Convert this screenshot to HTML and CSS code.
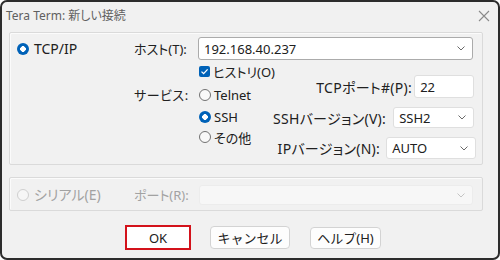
FILE: index.html
```html
<!DOCTYPE html>
<html>
<head>
    <title>Tera Term: 新しい接続</title>
    <link rel="stylesheet" href="styles.css">
</head>
<body>
    <div class="window">
        <div class="titlebar">
            <span class="title">Tera Term: 新しい接続</span>
            <svg class="close" width="12" height="12" viewBox="0 0 12 12">
                <path d="M1 1 L11 11 M11 1 L1 11" stroke="#8a8a8a" stroke-width="1.1" fill="none"/>
            </svg>
        </div>

        <!-- TCP/IP group -->
        <div class="group net">
            <div class="host-row">
                <label class="radio-item first"><span class="radio on"></span>TCP/IP</label>
                <span class="lbl host-lbl">ホスト(T):</span>
                <div class="combo host">
                    <span>192.168.40.237</span>
                    <svg class="chev" width="8" height="5" viewBox="0 0 8 5"><path d="M0.5 0.5 L4 4 L7.5 0.5" stroke="#6a6a6a" fill="none"/></svg>
                </div>
            </div>
            <div class="lower">
                <div class="svc-lbl">サービス:</div>
                <div class="opts">
                    <label class="opt check-item"><span class="check">
                        <svg width="11" height="11" viewBox="0 0 11 11"><path d="M2.5 5.6 L4.6 7.6 L8.6 3.4" stroke="#fff" stroke-width="1.3" fill="none"/></svg>
                    </span>ヒストリ(O)</label>
                    <label class="opt telnet"><span class="radio"></span>Telnet</label>
                    <label class="opt"><span class="radio on"></span>SSH</label>
                    <label class="opt other"><span class="radio"></span>その他</label>
                </div>
                <div class="params">
                    <div class="param port">
                        <span class="lbl">TCPポート#(P):</span>
                        <div class="edit port-box">22</div>
                    </div>
                    <div class="param ssh">
                        <span class="lbl">SSHバージョン(V):</span>
                        <div class="combo ssh-box">
                            <span>SSH2</span>
                            <svg class="chev" width="8" height="5" viewBox="0 0 8 5"><path d="M0.5 0.5 L4 4 L7.5 0.5" stroke="#6a6a6a" fill="none"/></svg>
                        </div>
                    </div>
                    <div class="param ip">
                        <span class="lbl">IPバージョン(N):</span>
                        <div class="combo ip-box">
                            <span>AUTO</span>
                            <svg class="chev" width="8" height="5" viewBox="0 0 8 5"><path d="M0.5 0.5 L4 4 L7.5 0.5" stroke="#6a6a6a" fill="none"/></svg>
                        </div>
                    </div>
                </div>
            </div>
        </div>

        <!-- Serial group -->
        <div class="group serial">
            <label class="radio-item first disabled"><span class="radio off"></span>シリアル(E)</label>
            <span class="lbl host-lbl disabled">ポート(R):</span>
            <div class="combo serial-box">
                <svg class="chev" width="8" height="5" viewBox="0 0 8 5"><path d="M0.5 0.5 L4 4 L7.5 0.5" stroke="#c4c4c4" fill="none"/></svg>
            </div>
        </div>

        <div class="buttons">
            <button class="btn ok">OK</button>
            <button class="btn cancel">キャンセル</button>
            <button class="btn help">ヘルプ(H)</button>
        </div>
    </div>
</body>
</html>
```

FILE: styles.css
```css
body {
    margin: 0;
    background: #fff;
    font-family: "Noto Sans", "Noto Sans CJK JP", sans-serif;
    font-feature-settings: "palt";
    font-size: 13px;
    color: #202020;
}

.window {
    width: 500px;
    height: 260px;
    box-sizing: border-box;
    border: 2px solid #2c2c2c;
    border-radius: 7px;
    background: #f1f1f1;
    overflow: hidden;
}

.titlebar {
    height: 28px;
    display: flex;
    align-items: center;
    justify-content: space-between;
    padding: 0 8px 2px 4px;
    box-sizing: border-box;
}

.title {
    font-size: 12px;
    color: #606060;
}

.close {
    margin-top: 2px;
}

.group {
    margin-left: 7px;
    width: 474px;
    box-sizing: border-box;
    border: 1px solid #dadada;
    border-radius: 2px;
    box-shadow: inset 1px 1px 0 #fbfbfb;
}

.net {
    margin-top: 2px;
    height: 133px;
    padding: 4px 9px 0 7px;
}

.host-row {
    display: flex;
    align-items: center;
    height: 23px;
}

.radio-item {
    display: flex;
    align-items: center;
    white-space: nowrap;
}

.first {
    width: 117px;
    font-size: 14px;
}

.radio {
    width: 10px;
    height: 10px;
    border: 1px solid #727272;
    border-radius: 50%;
    background: #f9f9f9;
    margin-right: 3px;
    flex: none;
}

.radio.on {
    width: 12px;
    height: 12px;
    border: none;
    background: radial-gradient(circle, #fff 0 2.6px, #0062b8 3px);
}

.first .radio {
    margin-right: 5px;
}

.radio.off {
    border-color: #cfcfcf;
    background: #f6f6f6;
}

.lbl {
    white-space: nowrap;
}

.host-lbl {
    width: 64px;
    flex: none;
}

.disabled {
    color: #a2a2a2;
}

.combo, .edit {
    display: flex;
    align-items: center;
    justify-content: space-between;
    box-sizing: border-box;
    background: #fff;
    border: 1px solid #dfdfdf;
    border-radius: 3px;
    padding: 0 7px 0 5px;
}

.host {
    flex: 1;
    height: 23px;
    border-color: #ababab;
}

.lower {
    display: flex;
}

.svc-lbl {
    margin: 24px 0 0 117px;
    width: 65px;
    height: 22px;
    line-height: 22px;
    flex: none;
    letter-spacing: 0.5px;
}

.opts {
    width: 74px;
    flex: none;
}

.opt {
    display: flex;
    align-items: center;
    height: 22px;
    white-space: nowrap;
}

.telnet {
    margin-top: 2px;
}

.other {
    margin-top: -2px;
}

.check {
    width: 11px;
    height: 11px;
    border-radius: 2px;
    background: #0062b8;
    margin-right: 3px;
    display: flex;
}

.params {
    flex: 1;
    display: flex;
    flex-direction: column;
    align-items: flex-end;
}

.param {
    display: flex;
    align-items: center;
    gap: 6px;
}

.param .lbl {
    font-size: 14px;
    letter-spacing: 0.3px;
}

.port {
    margin-top: 15px;
    gap: 2px;
}

.port-box {
    width: 60px;
    height: 23px;
}

.ssh {
    margin-top: 9px;
    gap: 7px;
}

.ssh-box {
    width: 81px;
    height: 21px;
}

.ip {
    margin-top: 9px;
    margin-right: -2px;
}

.ip-box {
    width: 90px;
    height: 22px;
}

.serial {
    margin-top: 12px;
    height: 34px;
    padding: 7px 9px 0 7px;
    display: flex;
    align-items: flex-start;
}

.serial .first,
.serial .host-lbl {
    height: 20px;
    line-height: 20px;
}

.serial-box {
    flex: 1;
    height: 20px;
    margin-left: 1px;
    background: #f7f7f7;
    border-color: #ececec;
    justify-content: flex-end;
}

.buttons {
    display: flex;
    align-items: center;
    margin-top: 14px;
    padding-left: 123px;
}

.btn {
    font-family: inherit;
    font-size: 13px;
    color: #202020;
    background: #fdfdfd;
    border: 1px solid #d3d3d3;
    border-radius: 4px;
    height: 23px;
    padding: 0;
}

.ok {
    width: 66px;
    height: 25px;
    border: 2px solid #d3121b;
    border-radius: 0;
    background: #fff;
}

.cancel {
    width: 80px;
    margin-left: 19px;
}

.help {
    width: 71px;
    height: 22px;
    margin-left: 20px;
}
```
